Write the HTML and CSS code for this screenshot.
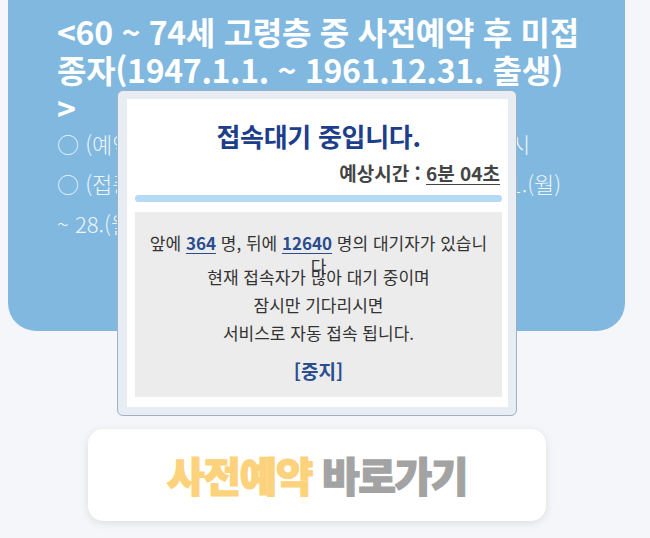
FILE: index.html
```html
<!DOCTYPE html>
<html lang="ko">
<head>
<meta charset="utf-8">
<title>접속대기</title>
<link rel="stylesheet" href="styles.css">
</head>
<body>
<div class="page">
  <section class="info-card">
    <h2 class="info-title">&lt;60 ~ 74세 고령층 중 사전예약 후 미접<br>종자(1947.1.1. ~ 1961.12.31. 출생)<br>&gt;</h2>
    <p class="info-line">○ (예약기간) 2021. 5. 10.(월) 20시 ~ 6. 3.(목) 18시</p>
    <p class="info-line">○ (접종기간) 2021. 5. 27.(목) ~ 6. 19.(토) 및 6. 21.(월)</p>
    <p class="info-line">~ 28.(월) 사전예약 후 미접종자 접종</p>
  </section>

  <a class="reserve-btn" href="#"><span class="hl">사전예약</span> <span class="go">바로가기</span></a>

  <div class="wait-popup">
    <div class="wait-panel">
      <h1 class="wait-title">접속대기 중입니다.</h1>
      <p class="wait-time">예상시간 : <u>6분 04초</u></p>
      <div class="wait-bar"></div>
      <div class="wait-box">
        <p class="wait-count">앞에 <b>364</b> 명, 뒤에 <b>12640</b> 명의 대기자가 있습니다</p>
        <p class="wait-msg">현재 접속자가 많아 대기 중이며<br>잠시만 기다리시면<br>서비스로 자동 접속 됩니다.</p>
        <a class="wait-stop" href="#">[중지]</a>
      </div>
    </div>
  </div>
</div>
</body>
</html>
```

FILE: styles.css
```css
* { box-sizing: border-box; }
html, body { margin: 0; padding: 0; }
body {
  background: #f4f6f9;
  font-family: "Noto Sans CJK KR", "Noto Sans", sans-serif;
  width: 650px;
  height: 538px;
  overflow: hidden;
}
.page {
  position: relative;
  padding: 0 25px 0 8px;
}
.info-card {
  background: #80b8df;
  border-radius: 0 0 28px 28px;
  padding: 12px 20px 88px 49px;
  color: #fff;
}
.info-title {
  margin: 0;
  font-size: 32px;
  line-height: 38px;
  font-weight: 700;
  white-space: nowrap;
  letter-spacing: -0.3px;
}
.info-line {
  margin: 0;
  font-size: 22px;
  line-height: 40px;
  font-weight: 300;
  color: #eef5fb;
  white-space: nowrap;
}
.info-line:first-of-type { margin-top: -3px; }

.reserve-btn {
  display: block;
  margin: 98px 79px 0 80px;
  height: 92px;
  background: #fff;
  border-radius: 15px;
  box-shadow: 0 2px 8px rgba(0, 0, 0, 0.1);
  text-align: center;
  text-decoration: none;
  font-size: 41px;
  line-height: 90px;
  font-weight: 900;
  letter-spacing: -1.5px;
}
.reserve-btn .hl { color: #fcd27c; -webkit-text-stroke: 1.2px #fcd27c; }
.reserve-btn .go { color: #a3a3a3; -webkit-text-stroke: 1.2px #a3a3a3; }

.wait-popup {
  position: absolute;
  left: 117px;
  top: 90px;
  width: 400px;
  padding: 8px 8px 8px 9px;
  background: #e7edf3;
  border: 1px solid #9fb0c2;
  border-radius: 6px;
}
.wait-panel {
  background: #fff;
  padding: 20px 6px 10px 8px;
}
.wait-title {
  margin: 0;
  text-align: center;
  font-size: 26px;
  line-height: 34px;
  font-weight: 700;
  color: #1d3e8a;
  letter-spacing: -0.3px;
}
.wait-time {
  margin: 8px 2px 0 0;
  text-align: right;
  font-size: 19px;
  line-height: 24px;
  font-weight: 700;
  color: #444;
}
.wait-time u { text-underline-offset: 3px; }
.wait-bar {
  margin-top: 10px;
  height: 7px;
  border-radius: 4px;
  background: #b5daf5;
}
.wait-box {
  margin-top: 10px;
  background: #ececec;
  padding: 19px 10px 12px;
  text-align: center;
  color: #333;
  font-size: 17px;
}
.wait-count {
  margin: 0;
  height: 32px;
  line-height: 23px;
}
.wait-count b {
  color: #2a4d8f;
  text-decoration: underline;
  text-underline-offset: 3px;
}
.wait-msg {
  margin: 0;
  line-height: 28px;
}
.wait-stop {
  display: block;
  margin-top: 10px;
  line-height: 28px;
  font-size: 19px;
  font-weight: 700;
  color: #2a4d8f;
  text-decoration: none;
}
```
